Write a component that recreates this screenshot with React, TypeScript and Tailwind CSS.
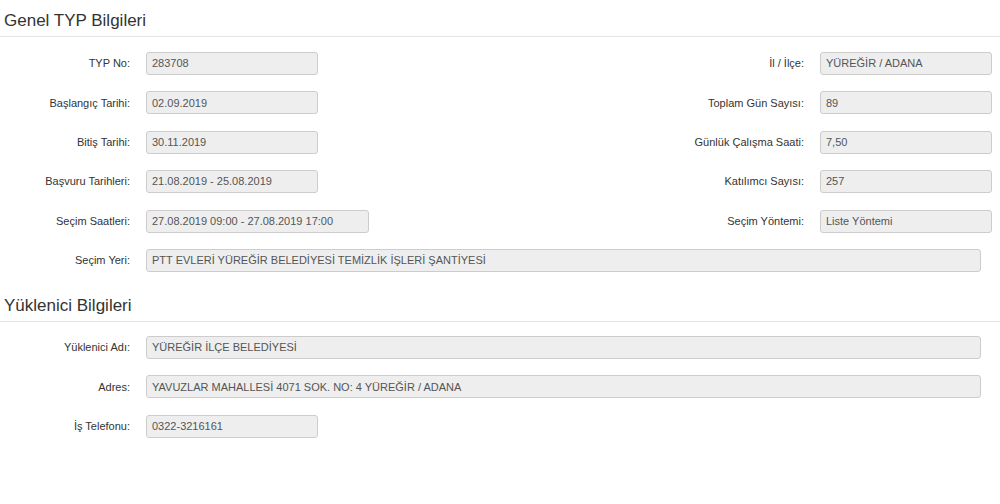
import React from "react";

type Field = { label: string; value: string; width?: string };

function Box({ value, width }: { value: string; width: string }) {
  return (
    <div
      className={`h-[23px] ${width} flex items-center rounded-[3px] border border-[#cccccc] bg-[#eeeeee] px-[5px] text-[11px] text-[#555555] whitespace-nowrap overflow-hidden`}>
      {value}
    </div>
  );
}

function Row({ left, right }: { left: Field; right?: Field }) {
  return (
    <div className="flex items-center">
      <div className="w-[130px] text-right text-[11px] text-[#333333]">{left.label}</div>
      <div className="ml-4">
        <Box value={left.value} width={left.width ?? "w-[172px]"} />
      </div>
      {right && (
        <div className="ml-auto mr-[8px] flex items-center">
          <div className="text-right text-[11px] text-[#333333]">{right.label}</div>
          <div className="ml-4">
            <Box value={right.value} width="w-[172px]" />
          </div>
        </div>
      )}
    </div>
  );
}

function SectionTitle({ title }: { title: string }) {
  return (
    <div className="border-b border-[#e5e5e5] pl-[4px] pb-[6px] text-[17px] leading-[19px] text-[#333333]">
      {title}
    </div>
  );
}

export default function App() {
  return (
    <div className="w-[1000px] h-[504px] bg-white font-['Liberation_Sans',Arial,sans-serif] overflow-hidden">
      {/* Genel TYP Bilgileri */}
      <div className="pt-[11px]">
        <SectionTitle title="Genel TYP Bilgileri" />
        <div className="flex flex-col gap-[16.4px] pt-[15px]">
          <Row
            left={{ label: "TYP No:", value: "283708" }}
            right={{ label: "İl / İlçe:", value: "YÜREĞİR / ADANA" }}
          />
          <Row
            left={{ label: "Başlangıç Tarihi:", value: "02.09.2019" }}
            right={{ label: "Toplam Gün Sayısı:", value: "89" }}
          />
          <Row
            left={{ label: "Bitiş Tarihi:", value: "30.11.2019" }}
            right={{ label: "Günlük Çalışma Saati:", value: "7,50" }}
          />
          <Row
            left={{ label: "Başvuru Tarihleri:", value: "21.08.2019 - 25.08.2019" }}
            right={{ label: "Katılımcı Sayısı:", value: "257" }}
          />
          <Row
            left={{ label: "Seçim Saatleri:", value: "27.08.2019 09:00 - 27.08.2019 17:00", width: "w-[223px]" }}
            right={{ label: "Seçim Yöntemi:", value: "Liste Yöntemi" }}
          />
          <Row
            left={{
              label: "Seçim Yeri:",
              value: "PTT EVLERİ YÜREĞİR BELEDİYESİ TEMİZLİK İŞLERİ ŞANTİYESİ",
              width: "w-[835px]",
            }}
          />
        </div>
      </div>

      {/* Yüklenici Bilgileri */}
      <div className="pt-[24px]">
        <SectionTitle title="Yüklenici Bilgileri" />
        <div className="flex flex-col gap-[16.4px] pt-[14px]">
          <Row left={{ label: "Yüklenici Adı:", value: "YÜREĞİR İLÇE BELEDİYESİ", width: "w-[835px]" }} />
          <Row
            left={{
              label: "Adres:",
              value: "YAVUZLAR MAHALLESİ 4071 SOK. NO: 4 YÜREĞİR / ADANA",
              width: "w-[835px]",
            }}
          />
          <Row left={{ label: "İş Telefonu:", value: "0322-3216161" }} />
        </div>
      </div>
    </div>
  );
}
